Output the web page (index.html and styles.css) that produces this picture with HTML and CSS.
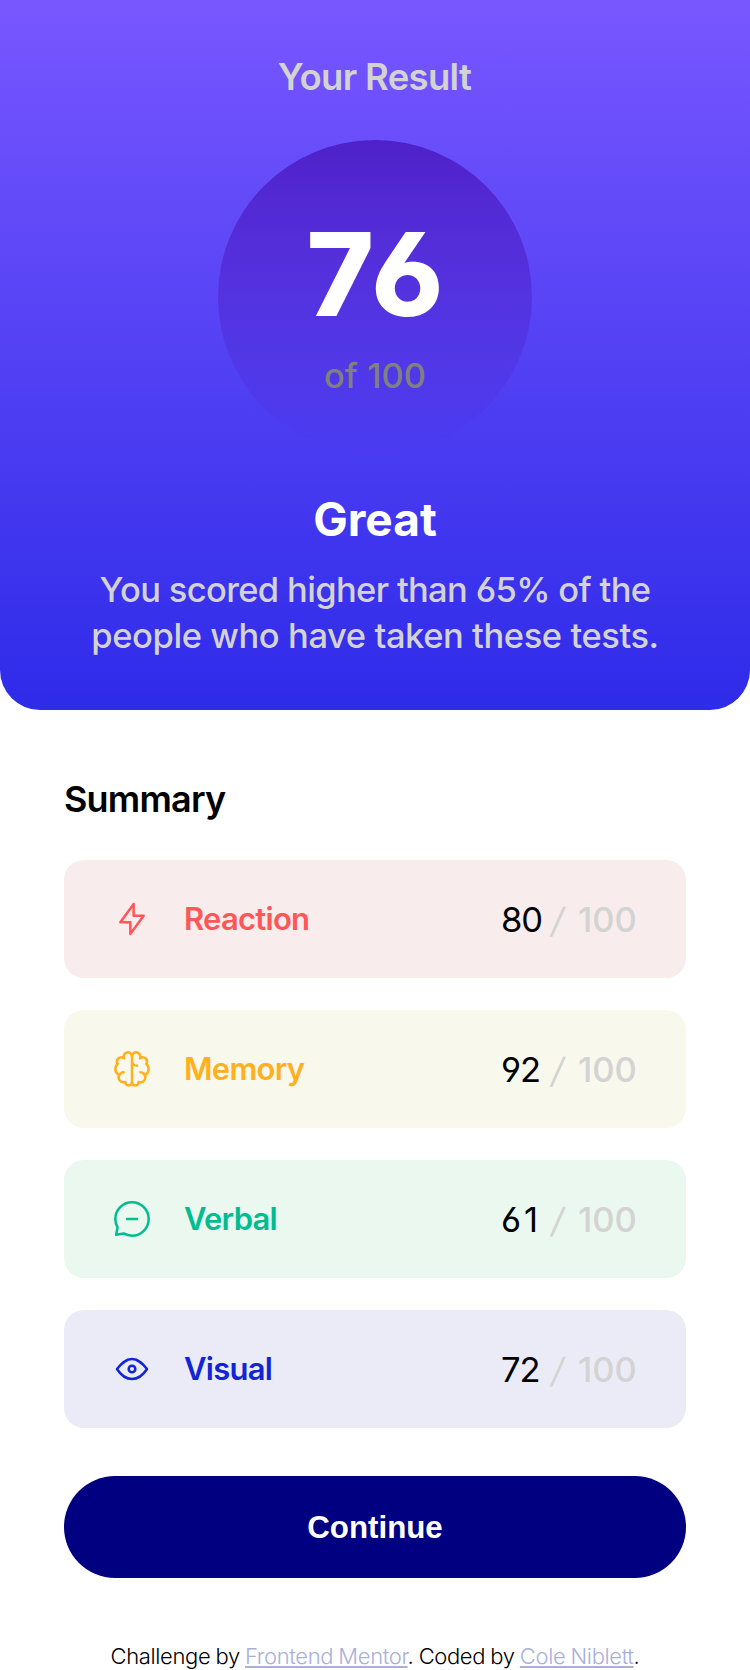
FILE: index.html
```html
<!DOCTYPE html>
<html lang="en">
<head>
<meta charset="utf-8">
<title>Results summary</title>
<link rel="stylesheet" href="styles.css">
</head>
<body>
<main>
  <section class="result">
    <h1 class="result-title">Your Result</h1>
    <div class="circle">
      <span class="score">76</span>
      <span class="score-of">of 100</span>
    </div>
    <h2 class="grade">Great</h2>
    <p class="blurb"><span class="blurb-a">You scored higher than 65% of the</span><br><span class="blurb-b">people who have taken these tests.</span></p>
  </section>
  <section class="summary">
    <h2 class="summary-title">Summary</h2>
    <ul class="cards">
      <li class="card reaction">
        <svg class="icon" viewBox="0 0 20 20"><path d="M10.833 8.333V2.5l-6.666 9.167h5V17.5l6.666-9.167h-5Z"/></svg>
        <span class="name">Reaction</span>
        <span class="value">80</span><span class="slash">/</span><span class="total">100</span>
      </li>
      <li class="card memory">
        <svg class="icon" viewBox="0 0 20 20"><path d="M5.833 11.667a2.5 2.5 0 1 0 .834 4.858"/><path d="M3.553 13.004a3.333 3.333 0 0 1-.728-5.53m.025-.067a2.083 2.083 0 0 1 2.983-2.824m.199.054A2.083 2.083 0 1 1 10 3.75v12.917a1.667 1.667 0 0 1-3.333 0M10 5.833a2.5 2.5 0 0 0 2.5 2.5m1.667 3.334a2.5 2.5 0 1 1-.834 4.858"/><path d="M16.447 13.004a3.334 3.334 0 0 0 .728-5.53m-.025-.067a2.083 2.083 0 0 0-2.983-2.824M10 3.75a2.085 2.085 0 0 1 2.538-2.033 2.084 2.084 0 0 1 1.43 2.92m-.635 12.03a1.667 1.667 0 0 1-3.333 0"/></svg>
        <span class="name">Memory</span>
        <span class="value">92</span><span class="slash">/</span><span class="total">100</span>
      </li>
      <li class="card verbal">
        <svg class="icon" viewBox="0 0 20 20"><path d="M7.5 10h5M10 18.333A8.333 8.333 0 1 0 1.667 10c0 1.518.406 2.942 1.115 4.167l-.699 3.75 3.75-.699A8.295 8.295 0 0 0 10 18.333Z"/></svg>
        <span class="name">Verbal</span>
        <span class="value">61</span><span class="slash">/</span><span class="total">100</span>
      </li>
      <li class="card visual">
        <svg class="icon" viewBox="0 0 20 20"><circle cx="10" cy="10" r="1.667"/><path d="M17.5 10c-1.574 2.492-4.402 5-7.5 5s-5.926-2.508-7.5-5C4.416 7.632 6.66 5 10 5s5.584 2.632 7.5 5Z"/></svg>
        <span class="name">Visual</span>
        <span class="value">72</span><span class="slash">/</span><span class="total">100</span>
      </li>
    </ul>
    <button class="continue" type="button">Continue</button>
  </section>
</main>
<footer class="attribution">Challenge by <a href="#">Frontend Mentor</a>. Coded by <a href="#">Cole Niblett</a>.</footer>
</body>
</html>
```

FILE: styles.css
```css
* { box-sizing: border-box; margin: 0; padding: 0; }

body {
  background: #fff;
  color: #000;
  font-family: Inter, "Liberation Sans", sans-serif;
  font-feature-settings: "cv03", "cv04";
}

.result {
  display: flex;
  flex-direction: column;
  align-items: center;
  height: 710px;
  padding-top: 54px;
  border-radius: 0 0 40px 40px;
  background: linear-gradient(#7857ff, #2e2be9);
  color: lightgray;
  text-align: center;
}

.result-title { font-size: 36.5px; font-weight: 600; line-height: 46px; letter-spacing: -0.7px; text-indent: -1px; }

.circle {
  display: flex;
  flex-direction: column;
  align-items: center;
  width: 314px;
  height: 314px;
  margin-top: 40px;
  padding-top: 77px;
  border-radius: 50%;
  background: linear-gradient(hsla(256, 72%, 46%, 1), hsla(241, 72%, 46%, 0));
}

.score { color: #fff; font-size: 115px; font-weight: 800; line-height: 116px; letter-spacing: 3px; text-indent: 3px; }
.score-of { margin-top: 20px; color: gray; font-size: 34.5px; font-weight: 450; line-height: 46px; }

.grade { margin-top: 35px; color: #fff; font-size: 46px; font-weight: 700; line-height: 60px; }
.blurb { margin-top: 18px; font-size: 34.5px; font-weight: 450; line-height: 46px; white-space: nowrap; }
.blurb-a { letter-spacing: -0.65px; }
.blurb-b { letter-spacing: -0.42px; }

.summary { padding: 66px 64px 0; }
.summary-title { font-size: 36px; font-weight: 600; line-height: 46px; letter-spacing: -0.8px; }

.cards { display: grid; gap: 32px; margin-top: 38px; list-style: none; }

.card {
  display: grid;
  grid-template-columns: 40px 1fr 50px 26px 60px;
  align-items: center;
  height: 118px;
  padding: 0 48px;
  border-radius: 20px;
}

.icon { width: 40px; height: 40px; fill: none; stroke: currentColor; stroke-width: 1.25; stroke-linecap: round; stroke-linejoin: round; }
.name { padding: 0 0 2px 32px; font-size: 31px; font-weight: 600; letter-spacing: -0.75px; }
.value, .slash, .total { font-size: 34.5px; white-space: nowrap; }
.value { margin-left: -1px; color: #000; letter-spacing: -1px; }
.verbal .value { letter-spacing: 3px; }
.slash, .total { color: lightgray; }
.total { font-weight: 450; }
.slash { padding-top: 3px; transform: skewX(-10deg); }

.reaction { background: #f8ecec; color: #ff5757; }
.memory { background: #f8f8ec; color: #ffb01f; }
.verbal { background: #ebf8ef; color: #00bd91; }
.visual { background: #ebebf8; color: #1125d4; }

.continue {
  display: block;
  width: 100%;
  height: 102px;
  margin-top: 48px;
  padding-top: 2px;
  border: 0;
  border-radius: 51px;
  background: navy;
  color: #fff;
  font: 700 31.25px "Liberation Sans", sans-serif;
}

.attribution { height: 92px; padding-top: 64px; font-size: 22px; font-weight: 300; line-height: 28px; letter-spacing: -0.37px; word-spacing: -0.6px; text-align: center; white-space: nowrap; }
.attribution a { color: #a9b0d8; text-decoration-thickness: 2px; text-underline-offset: 2px; text-decoration-skip-ink: none; }
```
